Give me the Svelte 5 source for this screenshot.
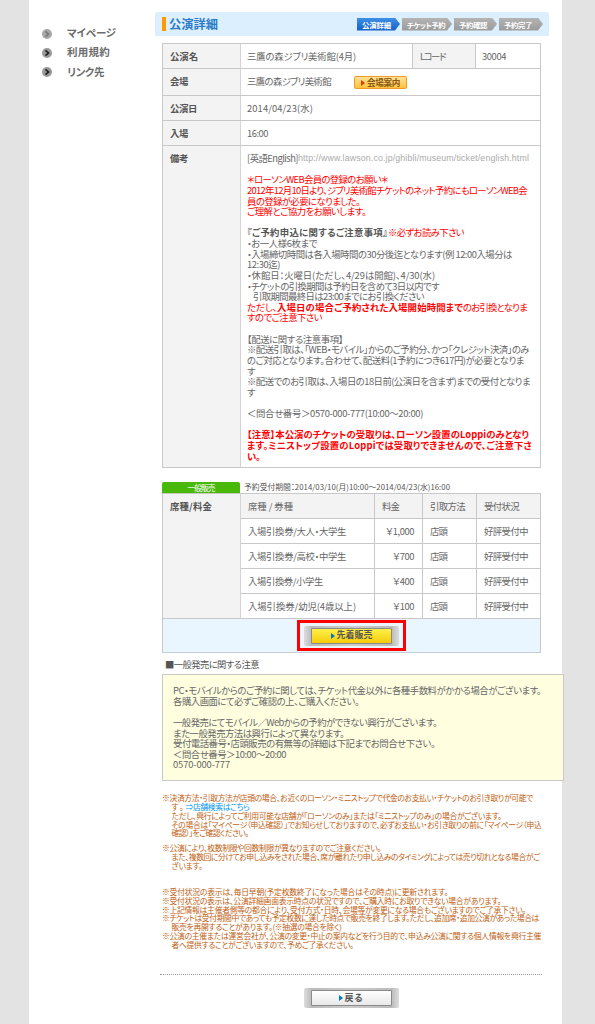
<script lang="ts">
type Part = { t: string; w: number; c?: string }

const menu: Part[] = [
  { t: "マイページ", w: 49 },
  { t: "利用規約", w: 43 },
  { t: "リンク先", w: 37 },
]

const steps = [
  { t: "公演詳細", w: 29, box: 43 },
  { t: "チケット予約", w: 38, box: 50 },
  { t: "予約確認", w: 28, box: 43 },
  { t: "予約完了", w: 28, box: 44 },
]

const remarks: Part[][] = [
  [{ t: "[英語English]", w: 51 }, { t: "http://www.lawson.co.jp/ghibli/museum/ticket/english.html", w: 231, c: "url" }],
  [],
  [{ t: "＊ローソンWEB会員の登録のお願い＊", w: 141, c: "red" }],
  [{ t: "2012年12月10日より、ジブリ美術館チケットのネット予約にもローソンWEB会", w: 280, c: "red" }],
  [{ t: "員の登録が必要になりました。", w: 113, c: "red" }],
  [{ t: "ご理解とご協力をお願いします。", w: 119, c: "red" }],
  [],
  [{ t: "『ご予約申込に関するご注意事項』", w: 141, c: "strong" }, { t: "※必ずお読み下さい", w: 76, c: "red" }],
  [{ t: "・お一人様6枚まで", w: 70 }],
  [{ t: "・入場締切時間は各入場時間の30分後迄となります(例 12:00入場分は", w: 265 }],
  [{ t: "12:30迄)", w: 33 }],
  [{ t: "・休館日：火曜日(ただし、4/29は開館)、4/30(水)", w: 188 }],
  [{ t: "・チケットの引換期間は予約日を含めて3日以内です", w: 192 }],
  [{ t: "引取期間最終日は23:00までにお引換ください", w: 171, c: "indent" }],
  [
    { t: "ただし、", w: 30, c: "red" },
    { t: "入場日の場合ご予約された入場開始時間まで", w: 186, c: "red bold" },
    { t: "のお引換となりま", w: 64, c: "red" },
  ],
  [{ t: "すのでご注意下さい", w: 75, c: "red" }],
  [],
  [{ t: "【配送に関する注意事項】", w: 96 }],
  [{ t: "※配送引取は、「WEB・モバイル」からのご予約分、かつ「クレジット決済」のみ", w: 282 }],
  [{ t: "のご対応となります。合わせて、配送料(1予約につき617円)が必要となりま", w: 277 }],
  [{ t: "す", w: 8 }],
  [{ t: "※配送でのお引取は、入場日の18日前(公演日を含まず)までの受付となりま", w: 283 }],
  [{ t: "す", w: 8 }],
  [],
  [{ t: "＜問合せ番号＞0570-000-777(10:00～20:00)", w: 176 }],
  [],
  [{ t: "【注意】本公演のチケットの受取りは、ローソン設置のLoppiのみとなり", w: 282, c: "red bold" }],
  [{ t: "ます。ミニストップ設置のLoppiでは受取りできませんので、ご注意下さ", w: 285, c: "red bold" }],
  [{ t: "い。", w: 13, c: "red bold" }],
]

const tickets = [
  { name: "入場引換券/大人・大学生", w: 98, price: "￥1,000", pw: 28 },
  { name: "入場引換券/高校・中学生", w: 98, price: "￥700", pw: 21 },
  { name: "入場引換券/小学生", w: 75, price: "￥400", pw: 21 },
  { name: "入場引換券/幼児(4歳以上)", w: 108, price: "￥100", pw: 21 },
]

const caution: Part[][] = [
  [{ t: "PC・モバイルからのご予約に関しては、チケット代金以外に各種手数料がかかる場合がございます。", w: 368 }],
  [{ t: "各購入画面にて必ずご確認の上、ご購入ください。", w: 186 }],
  [],
  [{ t: "一般発売にてモバイル／Webからの予約ができない興行がございます。", w: 264 }],
  [{ t: "また一般発売方法は興行によって異なります。", w: 171 }],
  [{ t: "受付電話番号・店頭販売の有無等の詳細は下記までお問合せ下さい。", w: 262 }],
  [{ t: "＜問合せ番号＞10:00～20:00", w: 113 }],
  [{ t: "0570-000-777", w: 57 }],
]

const payment: Part[][] = [
  [{ t: "※決済方法・引取方法が店頭の場合、お近くのローソン・ミニストップで代金のお支払い・チケットのお引き取りが可能で", w: 371 }],
  [{ t: "す。", w: 14, c: "hang" }, { t: "⇒店舗検索はこちら", w: 64, c: "link" }],
  [{ t: "ただし、興行によってご利用可能な店舗が「ローソンのみ」または「ミニストップのみ」の場合がございます。", w: 330, c: "hang" }],
  [{ t: "その場合は「マイページ（申込確認）」でお知らせしておりますので、必ずお支払い・お引き取りの前に「マイページ（申込", w: 370, c: "hang" }],
  [{ t: "確認）」をご確認ください。", w: 77, c: "hang" }],
]

const limits: Part[][] = [
  [{ t: "※公演により、枚数制限や回数制限が異なりますのでご注意ください。", w: 219 }],
  [{ t: "また、複数回に分けてお申し込みをされた場合、席が離れたり申し込みのタイミングによっては売り切れとなる場合がご", w: 368, c: "hang" }],
  [{ t: "ざいます。", w: 31, c: "hang" }],
]

const status: Part[][] = [
  [{ t: "※受付状況の表示は、毎日早朝(予定枚数終了になった場合はその時点)に更新されます。", w: 286 }],
  [{ t: "※受付状況の表示は、公演詳細画面表示時点の状況ですので、ご購入時にお取りできない場合があります。", w: 339 }],
  [{ t: "※上記情報は主催者側等の都合により、受付方式・日時、会場等が変更になる場合もございますのでご了承下さい。", w: 364 }],
  [{ t: "※チケットは受付期間中であっても予定枚数に達した時点で販売を終了します。ただし、追加席・追加公演があった場合は", w: 377 }],
  [{ t: "販売を再開することがあります。(※抽選の場合を除く)", w: 170, c: "hang" }],
  [{ t: "※公演の主催または運営会社が、公演の変更・中止の案内などを行う目的で、申込み公演に関する個人情報を興行主催", w: 379 }],
  [{ t: "者へ提供することがございますので、予めご了承ください。", w: 182, c: "hang" }],
]

// spread a run of text over the given width
function fit(node: HTMLElement, width: number) {
  const natural = node.getBoundingClientRect().width
  const count = [...(node.textContent ?? "")].length
  node.style.letterSpacing = `${(width - natural) / count}px`
}
</script>

{#snippet run(t: string, w: number, c = "")}
  <span class="run {c}"><span use:fit={w}>{t}</span></span>
{/snippet}

{#snippet lines(rows: Part[][])}
  {#each rows as row}
    <div class="line">{#each row as p}{@render run(p.t, p.w, p.c)}{/each}</div>
  {/each}
{/snippet}

<div class="page">
  <nav class="side">
    {#each menu as item, i}
      <a href="#menu" class:dim={i === 0}>
        <svg width="12" height="12" viewBox="0 0 12 12">
          <circle cx="6" cy="6" r="5" fill="#999" />
          <path d="M4.5 3.4 7.5 6 4.5 8.6" fill="none" stroke={i === 0 ? "#666" : "#222"} stroke-width="1.7" />
        </svg>
        {@render run(item.t, item.w)}
      </a>
    {/each}
  </nav>

  <main>
    <header>
      <h1>{@render run("公演詳細", 49)}</h1>
      <ol class="steps">
        {#each steps as step, i}
          <li class:on={i === 0} style:width="{step.box}px">{@render run(step.t, step.w)}</li>
        {/each}
      </ol>
    </header>

    <section class="detail">
      <div class="row name">
        <div class="th">{@render run("公演名", 28)}</div>
        <div class="td">{@render run("三鷹の森ジブリ美術館(4月)", 109)}</div>
        <div class="td sub">{@render run("Lコード", 25)}</div>
        <div class="td code">{@render run("30004", 24)}</div>
      </div>
      <div class="row venue">
        <div class="th">{@render run("会場", 18)}</div>
        <div class="td">
          {@render run("三鷹の森ジブリ美術館", 84)}
          <button class="map"><svg width="4" height="6" viewBox="0 0 4 6"><path d="M0 0 4 3 0 6z" fill="#e03c00" /></svg>{@render run("会場案内", 33)}</button>
        </div>
      </div>
      <div class="row">
        <div class="th">{@render run("公演日", 27)}</div>
        <div class="td">{@render run("2014/04/23(水)", 66)}</div>
      </div>
      <div class="row">
        <div class="th">{@render run("入場", 18)}</div>
        <div class="td">{@render run("16:00", 21)}</div>
      </div>
      <div class="row remark">
        <div class="th">{@render run("備考", 18)}</div>
        <div class="td">{@render lines(remarks)}</div>
      </div>
    </section>

    <div class="period">
      <div class="tab">{@render run("一般販売", 27)}</div>
      {@render run("予約受付期間：2014/03/10(月)10:00～2014/04/23(水)16:00", 206)}
    </div>

    <section class="sale">
      <div class="th">{@render run("席種/料金", 42)}</div>
      <div class="grid">
        <div class="head">{@render run("席種 / 券種", 45)}</div>
        <div class="head">{@render run("料金", 17)}</div>
        <div class="head">{@render run("引取方法", 35)}</div>
        <div class="head">{@render run("受付状況", 35)}</div>
        {#each tickets as ticket}
          <div>{@render run(ticket.name, ticket.w)}</div>
          <div class="price">{@render run(ticket.price, ticket.pw)}</div>
          <div>{@render run("店頭", 17)}</div>
          <div>{@render run("好評受付中", 44)}</div>
        {/each}
      </div>
      <div class="buy">
        <div class="mark">
          <div class="plate">
            <button class="yellow"><svg width="4" height="6" viewBox="0 0 4 6"><path d="M0 0 4 3 0 6z" fill="#0078c8" /></svg>{@render run("先着販売", 36)}</button>
          </div>
        </div>
      </div>
    </section>

    <h2>{@render run("■一般発売に関する注意", 94)}</h2>
    <section class="caution">{@render lines(caution)}</section>

    <section class="notes">
      <div class="pay">{@render lines(payment)}</div>
      <div class="limit">{@render lines(limits)}</div>
      <div class="state">{@render lines(status)}</div>
    </section>

    <footer>
      <div class="plate">
        <button><svg width="4" height="6" viewBox="0 0 4 6"><path d="M0 0 4 3 0 6z" fill="#0078c8" /></svg>{@render run("戻る", 19)}</button>
      </div>
    </footer>
  </main>
</div>

<style>
  :global(body) {
    margin: 0;
    background: #e3e3e3;
  }

  .page {
    box-sizing: border-box;
    display: flex;
    width: 533px;
    height: 1024px;
    margin-left: 29px;
    background: #fff;
    font-family: "Noto Sans CJK JP", sans-serif;
    font-size: 9.4px;
    line-height: 10.63px;
    color: #666;
    font-feature-settings: "palt";
  }

  .run,
  .run span {
    display: inline-block;
    vertical-align: top;
    white-space: pre;
  }

  button {
    box-sizing: border-box;
    display: flex;
    align-items: center;
    justify-content: center;
    gap: 2px;
    padding: 0;
    font: inherit;
    font-feature-settings: inherit;
    color: inherit;
  }

  .side {
    flex: none;
    width: 126px;
    padding-top: 24px;
  }

  .side a {
    display: flex;
    align-items: center;
    gap: 14px;
    height: 19.2px;
    padding-left: 12px;
    font-size: 10.5px;
    font-weight: 700;
    color: #6c6c6c;
    text-decoration: none;
  }

  .side .dim svg {
    opacity: 0.85;
  }

  main {
    flex: none;
    width: 409px;
    padding-top: 12px;
  }

  header {
    box-sizing: border-box;
    display: flex;
    align-items: center;
    justify-content: space-between;
    width: 394px;
    height: 24px;
    padding: 0 6px 0 7px;
    background: #dbefff;
    border-radius: 2px 2px 0 0;
  }

  h1 {
    margin: 0;
    padding-left: 3px;
    border-left: 4px solid #ff9900;
    font-size: 12.2px;
    line-height: 14px;
    font-weight: 700;
    color: #2a7bc8;
  }

  .steps {
    display: flex;
    gap: 2px;
    margin: 0;
    padding: 0;
    list-style: none;
  }

  .steps li {
    box-sizing: border-box;
    height: 13px;
    padding-left: 5px;
    background: linear-gradient(#b4b4b4, #9a9a9a);
    clip-path: polygon(0 0, calc(100% - 5px) 0, 100% 50%, calc(100% - 5px) 100%, 0 100%);
    font-size: 7.4px;
    font-weight: 700;
    line-height: 13px;
    color: #fff;
  }

  .steps .on {
    background: linear-gradient(#3f8fe6, #1260c8);
  }

  .detail {
    box-sizing: border-box;
    width: 379px;
    margin: 7px 0 0 7px;
    border: 1px solid #c8c8c8;
    border-top: 0;
  }

  .row {
    display: flex;
    box-sizing: border-box;
    height: 25px;
    border-top: 1px solid #c8c8c8;
  }

  .th {
    box-sizing: border-box;
    flex: none;
    width: 78px;
    padding: 7px 0 0 7px;
    background: #f3f3f3;
    border-right: 1px solid #d4d4d4;
    font-weight: 700;
    color: #555;
  }

  .td {
    box-sizing: border-box;
    flex: 1;
    padding: 7px 0 0 6px;
  }

  .td.sub {
    flex: none;
    width: 64px;
    padding-left: 7px;
    background: #f3f3f3;
    border: solid #c8c8c8;
    border-width: 0 1px;
  }

  .td.code {
    flex: none;
    width: 64px;
  }

  .row.venue {
    height: 27px;
  }

  .venue .td {
    display: flex;
    gap: 23px;
  }

  .map {
    width: 53px;
    height: 13px;
    border: 1px solid #f09a28;
    border-radius: 2px;
    background: linear-gradient(#ffe196, #ffc23c);
    font-size: 8.6px;
    font-weight: 700;
    color: #8a5a14;
  }

  .row.remark {
    height: 322px;
  }

  .line {
    display: flex;
    height: 10.63px;
  }

  .url {
    font-family: "Liberation Sans", sans-serif;
    font-size: 8.8px;
    color: #aaa;
  }

  .red {
    color: #f00;
  }

  .strong {
    font-weight: 700;
    color: #555;
  }

  .bold {
    font-weight: 700;
  }

  .indent {
    padding-left: 6px;
  }

  .period {
    display: flex;
    gap: 4px;
    height: 11px;
    margin: 14px 0 0 7px;
    font-size: 7.8px;
    line-height: 9px;
    color: #555;
  }

  .tab {
    width: 78px;
    background: #48b80a;
    border-radius: 2px 2px 0 0;
    line-height: 11px;
    text-align: center;
    color: #fff;
  }

  .sale {
    box-sizing: border-box;
    display: grid;
    grid-template: 125px 33px / 78px 1fr;
    width: 379px;
    margin-left: 7px;
    border: 1px solid #c8c8c8;
    border-bottom-color: #c3d0d8;
  }

  .sale .grid {
    display: grid;
    grid-template: repeat(5, 25px) / 134px 48px 54px 63px;
  }

  .sale > .th {
    border-bottom: 1px solid #c8c8c8;
  }

  .grid > div {
    box-sizing: border-box;
    padding: 7px 0 0 7px;
    border: solid #c8c8c8;
    border-width: 0 1px 1px 0;
  }

  .grid > div:nth-child(4n) {
    border-right: 0;
  }

  .grid .head {
    background: #f3f3f3;
  }

  .grid .price {
    padding: 7px 8px 0 0;
    text-align: right;
  }

  .buy {
    grid-column: 1 / 3;
    display: flex;
    justify-content: center;
    background: #eaf6ff;
  }

  .mark {
    box-sizing: border-box;
    display: flex;
    align-items: center;
    justify-content: center;
    width: 109px;
    height: 31px;
    margin-top: 1px;
    border: 3px solid #f00;
  }

  .plate {
    box-sizing: border-box;
    width: 95px;
    height: 20px;
    padding: 2px 7px;
    background: linear-gradient(90deg, #ddd, #bbb 8%, #ccc 50%, #bbb 92%, #ddd);
    border-radius: 2px;
  }

  .plate button {
    width: 81px;
    height: 16px;
    border: 1px solid #8a8a8a;
    border-radius: 1px;
    background: linear-gradient(#fff, #e8e8e8);
    font-size: 9px;
    font-weight: 700;
    color: #555;
  }

  .plate .yellow {
    background: linear-gradient(#fff04a, #f8cc08);
  }

  h2 {
    margin: 6px 0 0 10px;
    height: 15px;
    font-size: 9.3px;
    font-weight: 400;
    color: #555;
  }

  .caution {
    box-sizing: border-box;
    width: 402px;
    height: 107px;
    margin-left: 7px;
    padding: 10px 0 0 10px;
    background: #ffffe0;
    border: 1px solid #c8c8c8;
  }

  .notes {
    margin: 13px 0 0 7px;
    font-size: 7.8px;
    line-height: 8.87px;
    color: #c06010;
  }

  .notes .line {
    height: 8.87px;
  }

  .hang {
    padding-left: 9.5px;
  }

  .link {
    color: #0096f0;
  }

  .limit {
    margin-top: 6px;
  }

  .state {
    margin-top: 17px;
  }

  footer {
    display: flex;
    justify-content: center;
    width: 382px;
    margin: 24px 0 0 5px;
    padding-top: 13px;
    border-top: 1px dotted #999;
  }
</style>
